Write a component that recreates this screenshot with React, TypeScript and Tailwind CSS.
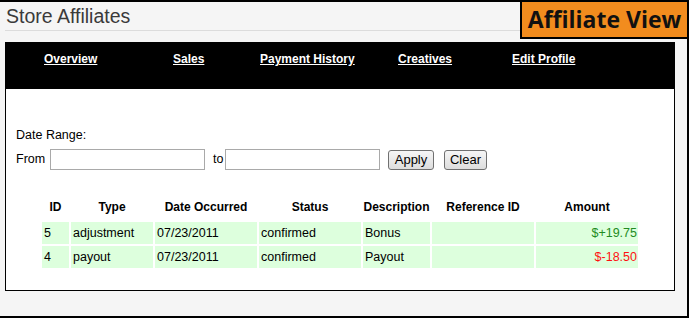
import React from "react";

const navItems = [
  { label: "Overview", w: "w-[129px]" },
  { label: "Sales", w: "w-[87px]" },
  { label: "Payment History", w: "w-[138px]" },
  { label: "Creatives", w: "w-[114px]" },
  { label: "Edit Profile", w: "w-[100px]" },
];

const rows = [
  { id: "5", type: "adjustment", date: "07/23/2011", status: "confirmed", desc: "Bonus", ref: "", amount: "$+19.75", pos: true },
  { id: "4", type: "payout", date: "07/23/2011", status: "confirmed", desc: "Payout", ref: "", amount: "$-18.50", pos: false },
];

export default function App() {
  return (
    <div className="w-[689px] h-[318px] bg-[#f5f5f5] border-t-2 border-r-2 border-b-2 border-black font-['Liberation_Sans',Arial,sans-serif] text-black overflow-hidden">
      <div className="flex">
        <div className="flex-1 pl-[5px]">
          <div className="h-[29px] pl-px pt-[3px] text-[19.5px] leading-[22px] text-[#3a3a3a] border-b border-[#dcdcdc]">
            Store Affiliates
          </div>
        </div>
        <div className="w-[167px] h-[37px] bg-[#f28c1e] border-l-2 border-b-2 border-black flex items-center justify-center">
          <span className="font-['Open_Sans',sans-serif] font-bold text-[23px] leading-none text-[#111]">Affiliate View</span>
        </div>
      </div>

      <div className="ml-[5px] mt-[3px] w-[670px] h-[249px] bg-white border border-black">
        <div className="h-[46px] bg-black pl-[38px] pt-[9px] flex items-start">
          {navItems.map((n) => (
            <div key={n.label} className={`${n.w} text-[12px] leading-[14px]`}>
              <a href="#" className="text-white font-bold underline">
                {n.label}
              </a>
            </div>
          ))}
        </div>

        <div className="pl-[10px] pt-[39px] text-[12.5px] leading-[15px]">
          <div>Date Range:</div>
          <div className="mt-[5px] h-[23px] flex items-center">
            <span className="w-[29px] shrink-0">From</span>
            <input className="ml-[5px] w-[155px] h-[21px] border border-[#a9a9a9] bg-white outline-none shrink-0" />
            <span className="ml-[8px] w-[10px] shrink-0">to</span>
            <input className="ml-[2px] w-[155px] h-[21px] border border-[#a9a9a9] bg-white outline-none shrink-0" />
            <button className="ml-[8px] h-[20px] w-[46px] shrink-0 text-[13px] leading-[16px] border border-[#707070] rounded-[3px] bg-gradient-to-b from-[#f6f6f6] to-[#dddddd] text-black">
              Apply
            </button>
            <button className="ml-[10px] h-[20px] w-[43px] shrink-0 text-[13px] leading-[16px] border border-[#707070] rounded-[3px] bg-gradient-to-b from-[#f6f6f6] to-[#dddddd] text-black">
              Clear
            </button>
          </div>
        </div>

        <table className="mt-[23px] mx-auto w-[600px] table-fixed border-separate border-spacing-[2px]">
          <thead>
            <tr className="text-[12px] font-bold">
              <th className="w-[27px] h-[24px] align-top pt-[2px] font-bold">ID</th>
              <th className="w-[82px] align-top pt-[2px] font-bold">Type</th>
              <th className="w-[102px] align-top pt-[2px] font-bold">Date Occurred</th>
              <th className="w-[102px] align-top pt-[2px] font-bold">Status</th>
              <th className="w-[67px] align-top pt-[2px] font-bold">Description</th>
              <th className="w-[102px] align-top pt-[2px] font-bold">Reference ID</th>
              <th className="w-[102px] align-top pt-[2px] font-bold">Amount</th>
            </tr>
          </thead>
          <tbody className="text-[12.5px]">
            {rows.map((r) => (
              <tr key={r.id} className="h-[22px]">
                <td className="bg-[#ddffdd] px-[2px] whitespace-nowrap">{r.id}</td>
                <td className="bg-[#ddffdd] px-[2px] whitespace-nowrap">{r.type}</td>
                <td className="bg-[#ddffdd] px-[2px] whitespace-nowrap">{r.date}</td>
                <td className="bg-[#ddffdd] px-[2px] whitespace-nowrap">{r.status}</td>
                <td className="bg-[#ddffdd] px-[2px] whitespace-nowrap">{r.desc}</td>
                <td className="bg-[#ddffdd] px-[2px] whitespace-nowrap">{r.ref}</td>
                <td className={`bg-[#ddffdd] pl-[2px] pr-[1px] text-right whitespace-nowrap ${r.pos ? "text-[#228b22]" : "text-[#ff1111]"}`}>
                  {r.amount}
                </td>
              </tr>
            ))}
          </tbody>
        </table>
      </div>
    </div>
  );
}
